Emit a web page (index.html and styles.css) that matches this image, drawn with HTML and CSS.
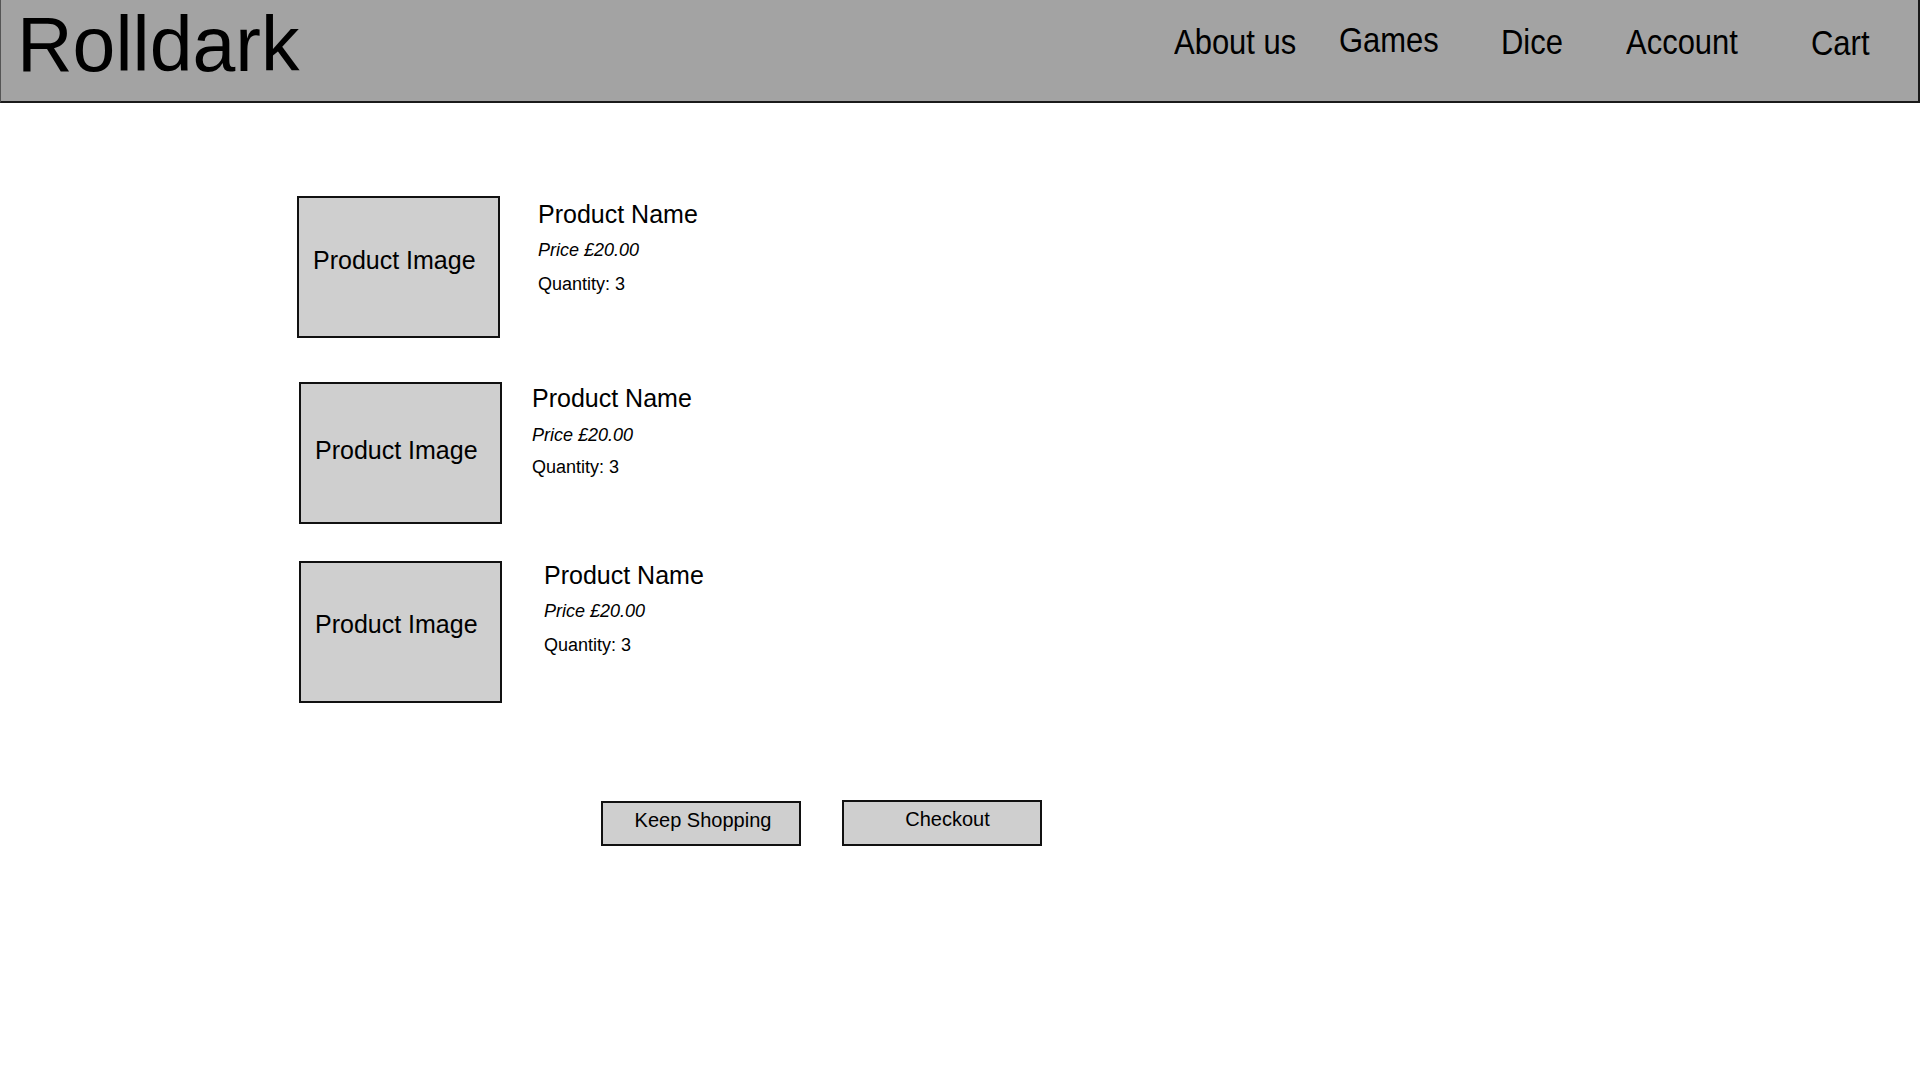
FILE: index.html
```html
<!DOCTYPE html>
<html lang="en">
<head>
<meta charset="utf-8">
<title>Rolldark - Cart</title>
<link rel="stylesheet" href="styles.css">
</head>
<body>
<header class="site-header">
  <div class="logo">Rolldark</div>
  <nav class="nav">
    <a class="nav-link" href="#">About us</a>
    <a class="nav-link nav-games" href="#">Games</a>
    <a class="nav-link" href="#">Dice</a>
    <a class="nav-link" href="#">Account</a>
    <a class="nav-link nav-cart" href="#">Cart</a>
  </nav>
</header>
<main class="cart">
  <div class="item item-1">
    <div class="thumb"><span>Product Image</span></div>
    <div class="info">
      <div class="name">Product Name</div>
      <div class="price">Price £20.00</div>
      <div class="qty">Quantity: 3</div>
    </div>
  </div>
  <div class="item item-2">
    <div class="thumb"><span>Product Image</span></div>
    <div class="info">
      <div class="name">Product Name</div>
      <div class="price">Price £20.00</div>
      <div class="qty">Quantity: 3</div>
    </div>
  </div>
  <div class="item item-3">
    <div class="thumb"><span>Product Image</span></div>
    <div class="info">
      <div class="name">Product Name</div>
      <div class="price">Price £20.00</div>
      <div class="qty">Quantity: 3</div>
    </div>
  </div>
  <div class="actions">
    <button class="btn btn-keep" type="button">Keep Shopping</button>
    <button class="btn btn-checkout" type="button">Checkout</button>
  </div>
</main>
</body>
</html>
```
FILE: styles.css
```css
* { box-sizing: border-box; }

html, body {
  margin: 0;
  padding: 0;
  background: #ffffff;
  color: #000000;
  font-family: "Liberation Sans", Arial, sans-serif;
}

.site-header {
  display: flex;
  align-items: flex-start;
  height: 103px;
  background: #a3a3a3;
  border-left: 1px solid #555555;
  border-right: 2px solid #1a1a1a;
  border-bottom: 2px solid #1a1a1a;
  padding-left: 16px;
}

.logo {
  font-size: 77px;
  line-height: 77px;
  margin-top: 6px;
  color: #000;
}

.nav {
  margin-left: auto;
  display: grid;
  grid-template-columns: 165px 162px 125px 185px 107px;
  align-items: start;
}

.nav-link {
  display: inline-block;
  justify-self: start;
  font-size: 35px;
  line-height: 35px;
  color: #000;
  text-decoration: none;
  white-space: nowrap;
  margin-top: 24px;
  transform: scaleX(0.885);
  transform-origin: left center;
}

.nav-games { margin-top: 22px; }
.nav-cart { margin-top: 25px; }

.cart {
  padding-top: 93px;
  padding-left: 297px;
}

.item {
  display: flex;
  align-items: flex-start;
}

.item-2 { margin-top: 44px; margin-left: 2px; }
.item-3 { margin-top: 37px; margin-left: 2px; }

.thumb {
  width: 203px;
  height: 142px;
  border: 2px solid #111111;
  background: #cfcfcf;
  padding-left: 14px;
  padding-top: 50px;
  font-size: 25px;
  line-height: 25px;
  white-space: nowrap;
}

.item-2 .thumb { padding-top: 54px; }
.item-3 .thumb { padding-top: 49px; }

.info {
  margin-left: 38px;
  margin-top: 6px;
}

.item-2 .info { margin-left: 30px; margin-top: 4px; }
.item-3 .info { margin-left: 42px; margin-top: 2px; }

.name {
  font-size: 25px;
  line-height: 25px;
}

.price {
  font-size: 18px;
  line-height: 18px;
  font-style: italic;
  margin-top: 14px;
}

.qty {
  font-size: 18px;
  line-height: 18px;
  margin-top: 16px;
}

.item-2 .price { margin-top: 15px; }
.item-2 .qty { margin-top: 14px; }

.actions {
  display: flex;
  align-items: flex-start;
  gap: 41px;
  margin-top: 97px;
  margin-left: 304px;
}

.btn {
  width: 200px;
  height: 45px;
  border: 2px solid #111111;
  background: #cfcfcf;
  color: #000;
  font-family: inherit;
  font-size: 20px;
  line-height: 20px;
  padding: 7px 0 14px 0;
  text-align: center;
  display: block;
  margin: 0;
  border-radius: 0;
}

.btn-keep { margin-top: 1px; padding-left: 4px; }
.btn-checkout { height: 46px; padding-bottom: 15px; padding-left: 11px; }
```
